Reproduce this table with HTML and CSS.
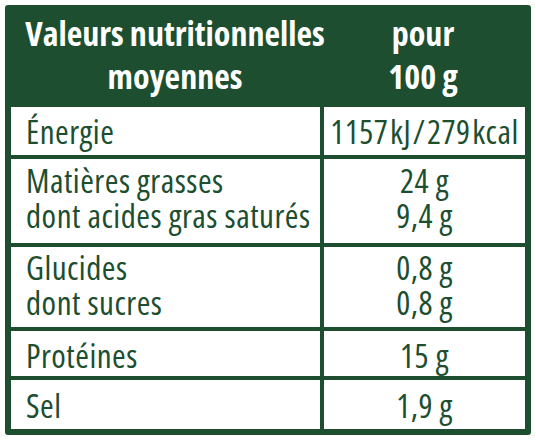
FILE: index.html
```html
<!DOCTYPE html>
<html lang="fr">
<head>
<meta charset="utf-8">
<title>Valeurs nutritionnelles</title>
<link rel="stylesheet" href="styles.css">
</head>
<body>
<div class="label">
  <div class="head">
    <div class="h-name">Valeurs nutritionnelles<br>moyennes</div>
    <div class="h-val">pour<br>100 g</div>
  </div>
  <div class="row r-energy">
    <div class="name">Énergie</div>
    <div class="val energy">1157 kJ / 279 kcal</div>
  </div>
  <div class="row r-fat">
    <div class="name">Matières grasses<br>dont acides gras saturés</div>
    <div class="val">24 g<br>9,4 g</div>
  </div>
  <div class="row r-carb">
    <div class="name">Glucides<br>dont sucres</div>
    <div class="val">0,8 g<br>0,8 g</div>
  </div>
  <div class="row r-prot">
    <div class="name">Protéines</div>
    <div class="val">15 g</div>
  </div>
  <div class="row r-salt">
    <div class="name">Sel</div>
    <div class="val">1,9 g</div>
  </div>
</div>
</body>
</html>
```
FILE: styles.css
```css
html, body {
  margin: 0;
  padding: 0;
  background: #ffffff;
}
body {
  font-family: "Open Sans", "DejaVu Sans Condensed", sans-serif;
  font-stretch: 75%;
  color: #1c4e2f;
}
.label {
  margin: 5px 0 0 5px;
  width: 526px;
  height: 430px;
  box-sizing: border-box;
  border: 6px solid #1c4e2f;
  border-radius: 3px;
  display: flex;
  flex-direction: column;
}
.head {
  background: #1c4e2f;
  color: #ffffff;
  font-weight: bold;
  font-size: 34px;
  line-height: 43px;
  height: 97px;
  display: grid;
  grid-template-columns: 328px 1fr;
  margin-top: -1px;
  padding-top: 2px;
  box-sizing: border-box;
  white-space: nowrap;
}
.h-name {
  text-align: center;
}
.h-val {
  text-align: center;
  padding-right: 18px;
}
.row {
  display: grid;
  grid-template-columns: 309px 1fr;
  border-bottom: 4px solid #1c4e2f;
  font-size: 33px;
  letter-spacing: 0.5px;
  line-height: 35px;
  box-sizing: border-box;
  white-space: nowrap;
}
.name {
  padding-left: 15px;
}
.val {
  text-align: center;
  word-spacing: 0;
  border-left: 4px solid #1c4e2f;
}
.val.energy {
  word-spacing: -5px;
}
.r-energy { height: 52px; }
.r-fat { height: 88px; }
.r-carb { height: 84px; }
.r-prot { height: 49px; }
.r-salt { height: 49px; border-bottom: none; flex: 1; }
.r-energy .name, .r-energy .val { padding-top: 7px; }
.r-fat .name, .r-fat .val { padding-top: 4px; }
.r-carb .name, .r-carb .val { padding-top: 3px; }
.r-prot .name, .r-prot .val { padding-top: 7px; }
.r-salt .name, .r-salt .val { padding-top: 8px; }
```
